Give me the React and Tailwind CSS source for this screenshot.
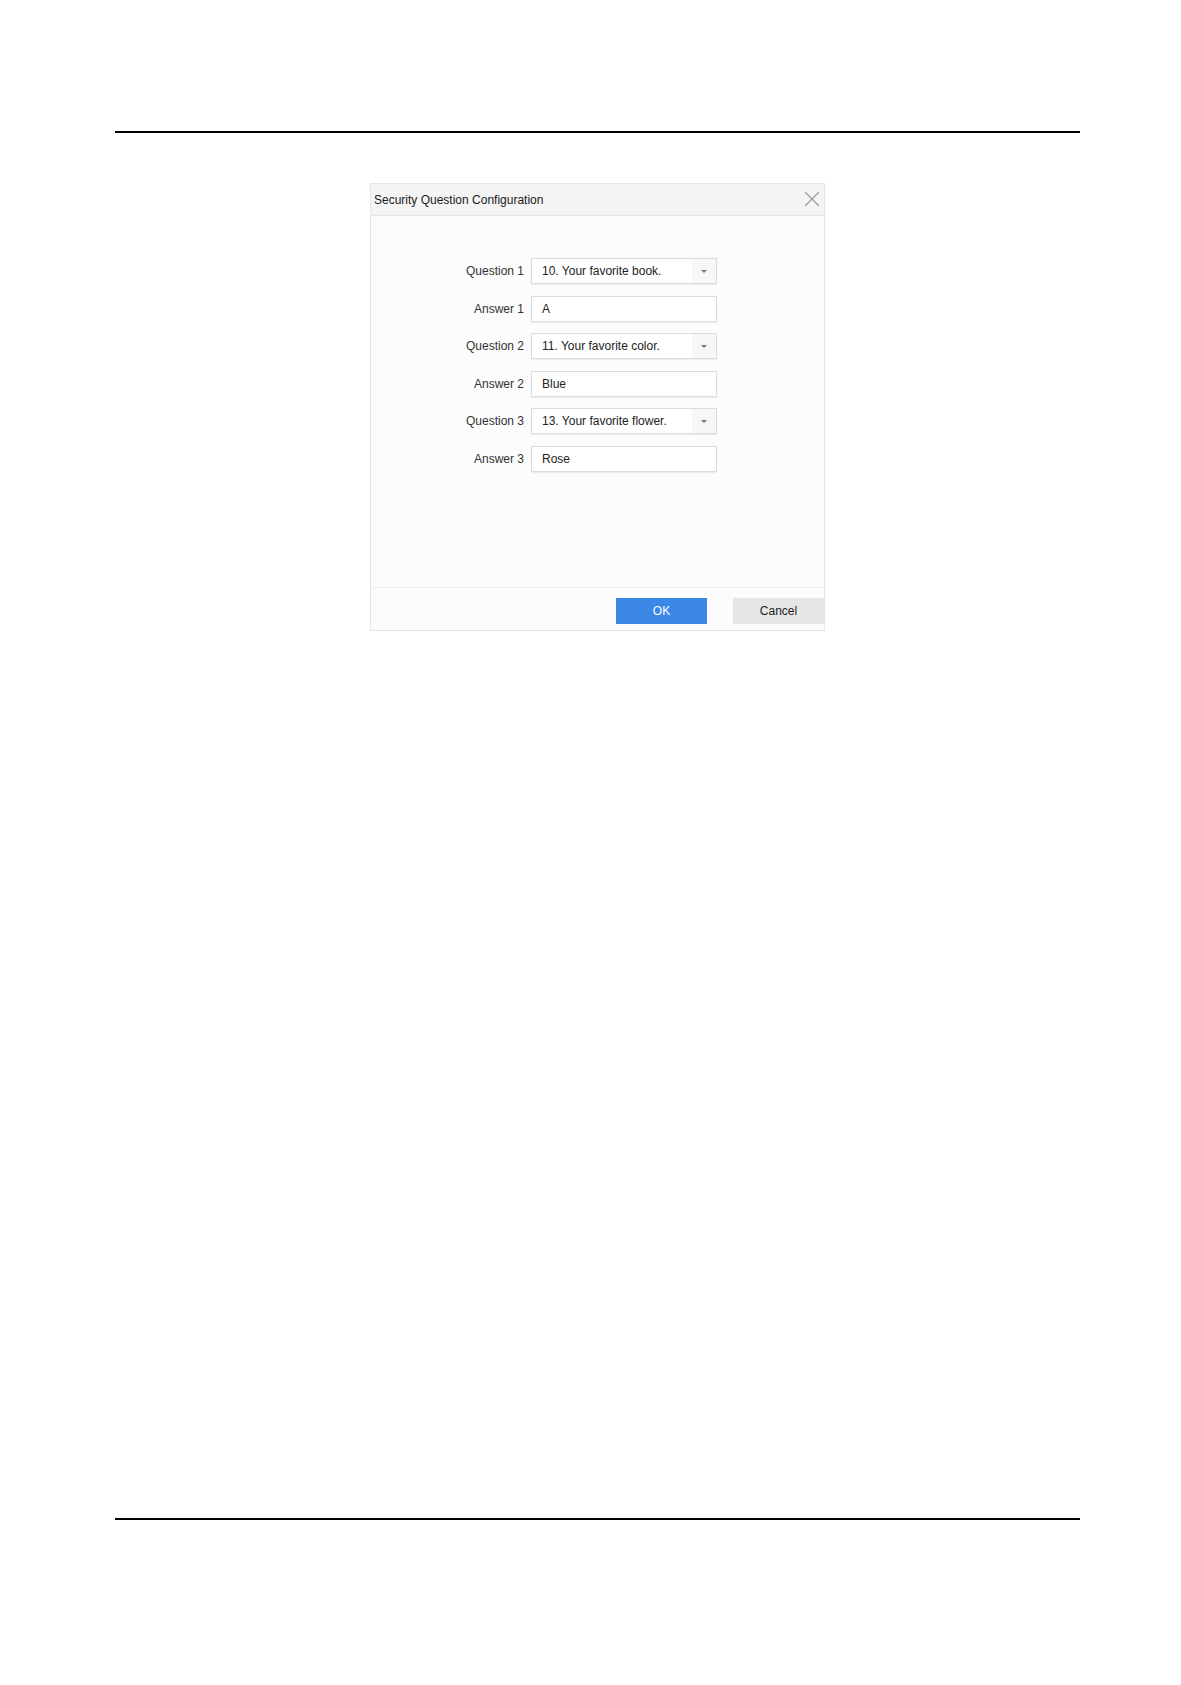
const questions = [
  { label: 'Question 1', value: '10. Your favorite book.', select: true },
  { label: 'Answer 1', value: 'A' },
  { label: 'Question 2', value: '11. Your favorite color.', select: true },
  { label: 'Answer 2', value: 'Blue' },
  { label: 'Question 3', value: '13. Your favorite flower.', select: true },
  { label: 'Answer 3', value: 'Rose' }
];

const Field = ({ label, value, select }) => (
  <div className="flex items-center h-[26px]">
    <label className="w-[100px] mr-[7px] text-right text-[12px] text-[#333]">{label}</label>
    <div className="flex w-[186px] h-[26px] bg-white border border-[#dcdcdc] shadow-[0_1px_1px_rgba(0,0,0,0.06)]">
      <span className="flex-1 flex items-center pl-[10px] text-[12px] text-[#222]">{value}</span>
      {select && (
        <span className="w-[24px] flex items-center justify-center bg-[#f7f7f7]">
          <span className="w-0 h-0 border-l-[3px] border-r-[3px] border-t-[3px] border-l-transparent border-r-transparent border-t-[#777]" />
        </span>
      )}
    </div>
  </div>
);

const App = () => (
  <div className="w-[1181px] h-[1685px] bg-white pt-[131px] font-['Liberation_Sans',Arial,sans-serif]">
    <div className="ml-[115px] w-[965px] h-[2px] bg-black" />
    <div className="ml-[115px] w-[965px] h-[1385px] pt-[50px]">
      <div className="mx-auto w-[455px] border border-[#e6e6e6] bg-[#fcfcfc]">
        <div className="flex items-center justify-between h-[32px] bg-[#f4f4f4] border-b border-[#e4e4e4] pl-[3px] pr-[4px]">
          <h2 className="text-[12px] text-[#1a1a1a]">Security Question Configuration</h2>
          <svg width="16" height="16" viewBox="0 0 16 16" className="mb-[1px]">
            <path d="M1 1 L15 15 M15 1 L1 15" stroke="#9a9a9a" strokeWidth="1.2" fill="none" />
          </svg>
        </div>
        <div className="h-[371px] pt-[42px] pl-[53px] flex flex-col gap-[11.5px]">
          {questions.map((q) => (
            <Field key={q.label} {...q} />
          ))}
        </div>
        <div className="flex justify-end items-start h-[43px] border-t border-[#eeeeee] pt-[10px] gap-[26px]">
          <button className="w-[91px] h-[26px] bg-[#3a87e6] text-white text-[12px]">OK</button>
          <button className="w-[91px] h-[26px] bg-[#e6e6e6] text-[#222] text-[12px]">Cancel</button>
        </div>
      </div>
    </div>
    <div className="ml-[115px] w-[965px] h-[2px] bg-black" />
  </div>
);

export default App;
